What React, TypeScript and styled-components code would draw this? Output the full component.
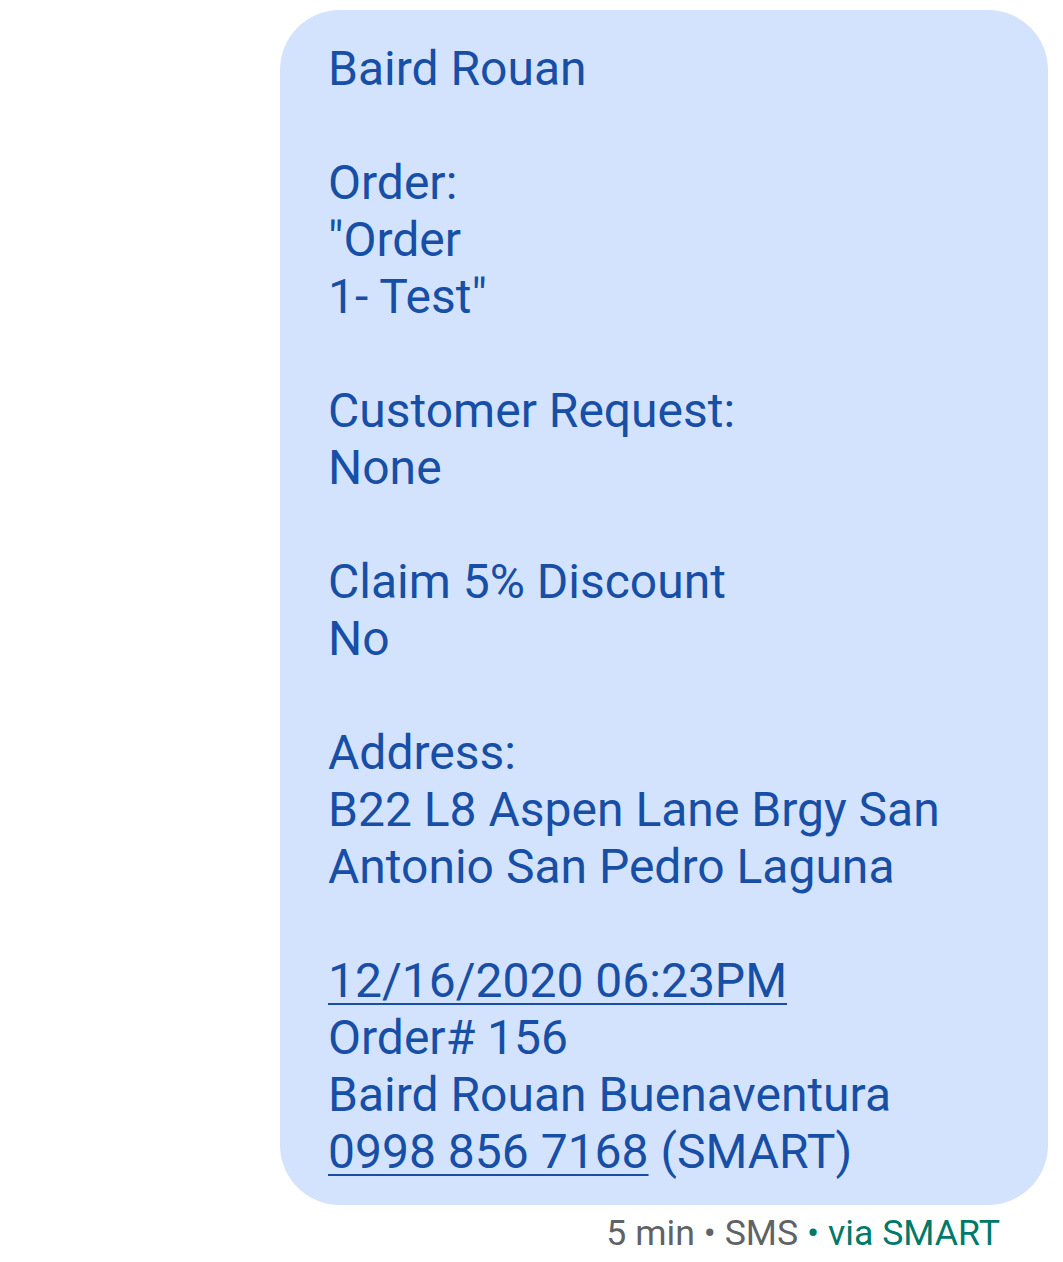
import { FC } from 'react';
import styled, { createGlobalStyle } from 'styled-components';

const GlobalStyle = createGlobalStyle`
	html, body {
		margin: 0;
		padding: 0;
		background: #ffffff;
	}
	body {
		font-family: Roboto, "Noto Sans", "Liberation Sans", sans-serif;
	}
`;

/* THREAD AREA */
const Thread = styled.div`
	display: flex;
	flex-direction: column;
	align-items: flex-end;
	padding: 10px 15px 0 0;
`;

/* OUTGOING SMS BUBBLE */
const Bubble = styled.div`
	box-sizing: border-box;
	width: 768px;
	padding: 30px 44px 25px 48px;
	background-color: #d3e3fd;
	border-radius: 60px;
	color: #174ea6;
	font-size: 48px;
	line-height: 57px;
	font-weight: 400;
	white-space: pre-wrap;
`;

const Line = styled.div`
	min-height: 57px;
`;

const Link = styled.span`
	text-decoration: underline;
	text-decoration-thickness: 2px;
	text-underline-offset: 6px;
`;

/* META ROW UNDER BUBBLE */
const Meta = styled.div`
	margin: 7px 48px 0 0;
	font-size: 35.7px;
	line-height: 42px;
	color: #5f6368;
`;

const Carrier = styled.span`
	color: #00796b;
`;

const App: FC = () => {
	return (
		<>
			<GlobalStyle />
			<Thread>
				<Bubble>
					<Line>Baird Rouan</Line>
					<Line />
					<Line>Order:</Line>
					<Line>"Order</Line>
					<Line>1- Test"</Line>
					<Line />
					<Line>Customer Request:</Line>
					<Line>None</Line>
					<Line />
					<Line>Claim 5% Discount</Line>
					<Line>No</Line>
					<Line />
					<Line>Address:</Line>
					<Line>B22 L8 Aspen Lane Brgy San Antonio San Pedro Laguna</Line>
					<Line />
					<Line>
						<Link>12/16/2020 06:23PM</Link>
					</Line>
					<Line>Order# 156</Line>
					<Line>Baird Rouan Buenaventura</Line>
					<Line>
						<Link>0998 856 7168</Link> (SMART)
					</Line>
				</Bubble>
				<Meta>
					5 min • SMS <Carrier>• via SMART</Carrier>
				</Meta>
			</Thread>
		</>
	);
};

export default App;
